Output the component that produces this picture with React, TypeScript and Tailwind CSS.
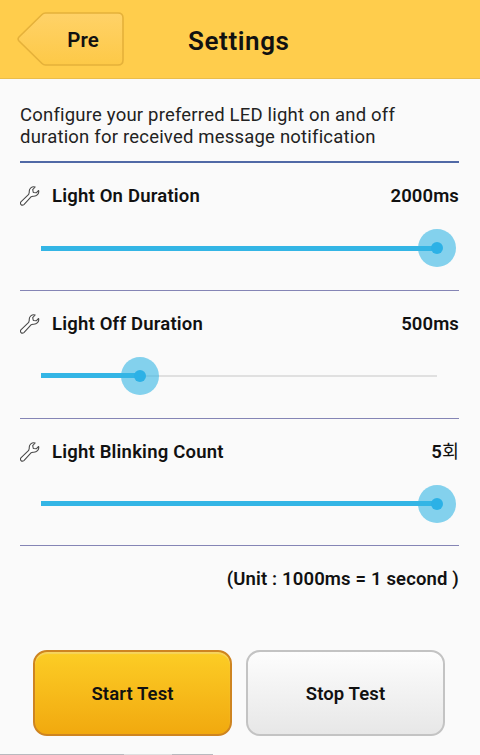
import React, { useState } from "react";

function WrenchIcon() {
  return (
    <svg width="20" height="20" viewBox="0 0 20 20" fill="#fff" stroke="#4a4a4a" strokeWidth="1.1" strokeLinejoin="round" className="relative -top-px">
      <path d="M15.1 1C12 .1 8.8 2.5 9.3 6.2L8.7 8.4L.9 15.8C-.5 17.7 1.7 20.2 3.9 18.6L11 10.8L13 10.2C16.8 10.7 19.4 7.5 18.6 4.5L16.2 6.8L13.3 6.5L12.7 3.6Z" />
    </svg>
  );
}

interface SettingRowProps {
  label: string;
  unit: string;
  max: number;
  initial: number;
}

function SettingRow({ label, unit, max, initial }: SettingRowProps) {
  const [value, setValue] = useState(initial);
  const percent = (value / max) * 100;

  return (
    <section className="h-[127.8px] border-b border-[#8585b5] pt-[22px]">
      <div className="flex h-6 items-center text-[18.5px] font-semibold text-[#111]">
        <WrenchIcon />
        <span className="ml-3 flex-1 tracking-[0.2px]">{label}</span>
        <span className="tracking-[0.1px]">
          {value}
          <span className={unit === "ms" ? "font-semibold" : "font-normal"}>{unit}</span>
        </span>
      </div>
      <div className="relative mt-[20px] mr-[22px] ml-[21px] flex h-[38px] items-center">
        <div className="h-[2px] w-full bg-[#e0e0e0]" />
        <div className="absolute left-0 h-[5px] bg-[#33b5e5]" style={{ width: `${percent}%` }} />
        <div
          className="absolute flex size-[38px] -translate-x-1/2 items-center justify-center rounded-full bg-[#33b5e5]/60"
          style={{ left: `${percent}%` }}
        >
          <div className="size-3 rounded-full bg-[#2cb1e6]" />
        </div>
        <input
          type="range"
          aria-label={label}
          min={0}
          max={max}
          value={value}
          onChange={(e) => setValue(Number(e.target.value))}
          className="absolute inset-0 w-full cursor-pointer opacity-0"
        />
      </div>
    </section>
  );
}

export default function App() {
  return (
    <div className="flex h-[755px] w-[480px] flex-col overflow-hidden bg-[#fafafa] font-['Roboto','Noto_Sans_CJK_KR',sans-serif] text-[#111]">
      <header className="flex h-[79px] shrink-0 items-center border-b border-[#eabd4b] bg-[#ffcd4c]">
        <button className="relative ml-[17px] h-[54px] w-[107px]">
          <svg className="absolute inset-0" width="107" height="54" viewBox="0 0 107 54">
            <defs>
              <linearGradient id="back" x1="0" y1="0" x2="0" y2="1">
                <stop offset="0" stopColor="#ffd268" />
                <stop offset="1" stopColor="#fdc947" />
              </linearGradient>
            </defs>
            <path
              d="M28.5 1H101Q106 1 106 6V48Q106 53 101 53H28.5Q26.5 53 25 51.5L2 29Q.2 27 2 25L25 2.5Q26.5 1 28.5 1Z"
              fill="url(#back)"
              stroke="#e5b13a"
              strokeWidth="1.6"
            />
          </svg>
          <span className="relative ml-[25px] inline-block pt-0.5 text-[20.5px] font-semibold">Pre</span>
        </button>
        <h1 className="ml-[64px] pt-[4px] text-[26px] font-semibold tracking-[0.6px]">Settings</h1>
      </header>

      <main className="flex flex-1 flex-col px-5 pr-[21px]">
        <p className="h-[84px] border-b-2 border-[#5069a6] pt-[25px] text-[18.5px] leading-[22px] tracking-[0.2px] whitespace-nowrap text-[#222]">
          Configure your preferred LED light on and off
          <br />
          duration for received message notification
        </p>
        <SettingRow label="Light On Duration" unit="ms" max={2000} initial={2000} />
        <SettingRow label="Light Off Duration" unit="ms" max={2000} initial={500} />
        <SettingRow label="Light Blinking Count" unit="회" max={5} initial={5} />
        <p className="mt-[21px] text-right text-[18.5px] leading-6 font-semibold tracking-[0.15px]">
          (Unit : 1000ms = 1 second )
        </p>
        <div className="mt-[59px] flex gap-[14px] pl-[13px] text-[18.5px] font-semibold tracking-[0.1px]">
          <button className="h-[86px] w-[199px] rounded-[14px] border-2 border-[#ce8420] bg-linear-to-b from-[#fccd25] to-[#f1a90e] pt-0.5 shadow-[inset_0_2px_1px_#f6d35e]">
            Start Test
          </button>
          <button className="h-[86px] w-[199px] rounded-[14px] border-2 border-[#c3c3c3] bg-linear-to-b from-[#fdfdfd] to-[#e7e7e7] pt-0.5">
            Stop Test
          </button>
        </div>
      </main>
      <div className="flex h-px shrink-0">
        <div className="w-[124px] bg-[#b9b9be]" />
        <div className="w-[48px] bg-[#dededf]" />
        <div className="w-[41px] bg-[#b9b9be]" />
      </div>
    </div>
  );
}
